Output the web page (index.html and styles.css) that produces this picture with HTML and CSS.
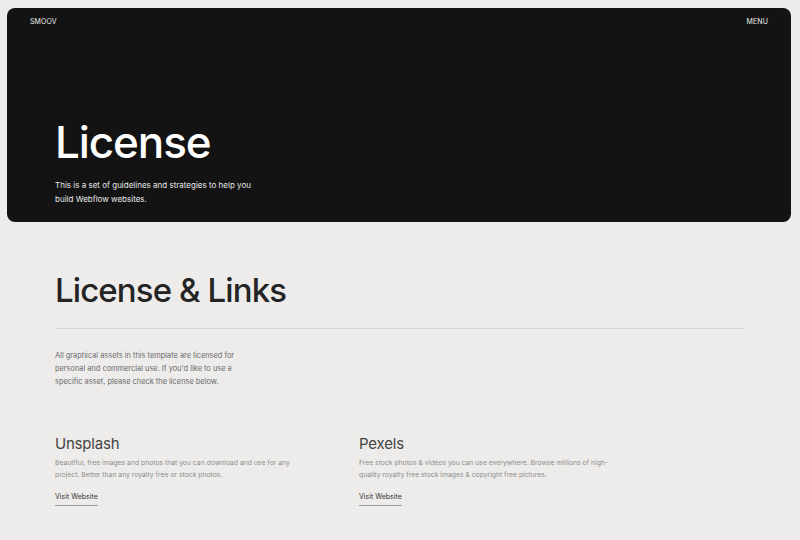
FILE: index.html
```html
<!DOCTYPE html>
<html lang="en">
<head>
<meta charset="utf-8">
<title>License</title>
<link rel="stylesheet" href="styles.css">
</head>
<body>
<header class="hero">
  <nav class="nav">
    <a class="brand" href="#">SMOOV</a>
    <a class="menu" href="#">MENU</a>
  </nav>
  <div class="hero-body">
    <h1 class="hero-title">License</h1>
    <p class="hero-text">This is a set of guidelines and strategies to help you build Webflow websites.</p>
  </div>
</header>
<main class="content">
  <h2 class="section-title">License &amp; Links</h2>
  <hr class="divider">
  <p class="intro">All graphical assets in this template are licensed for personal and commercial use. If you'd like to use a specific asset, please check the license below.</p>
  <div class="sources">
    <div class="source">
      <h3 class="source-name">Unsplash</h3>
      <p class="source-desc">Beautiful, free images and photos that you can download and use for any project. Better than any royalty free or stock photos.</p>
      <a class="source-link" href="#">Visit Website</a>
    </div>
    <div class="source">
      <h3 class="source-name">Pexels</h3>
      <p class="source-desc">Free stock photos &amp; videos you can use everywhere. Browse millions of high-quality royalty free stock images &amp; copyright free pictures.</p>
      <a class="source-link" href="#">Visit Website</a>
    </div>
  </div>
</main>
</body>
</html>
```

FILE: styles.css
```css
* { box-sizing: border-box; }
html, body { margin: 0; padding: 0; }
body {
  background: #edecea;
  font-family: Inter, "Noto Sans", sans-serif;
  color: #222;
  width: 800px;
  height: 540px;
  overflow: hidden;
}
a { text-decoration: none; color: inherit; }

.hero {
  margin: 8px 9px 0 7px;
  height: 214px;
  background: #131313;
  border-radius: 8px;
  color: #fff;
  display: flex;
  flex-direction: column;
  justify-content: space-between;
  padding: 0 0 16px 0;
}
.nav {
  display: flex;
  justify-content: space-between;
  padding: 8px 23px 0 23px;
  font-size: 7px;
  letter-spacing: 0.1px;
  line-height: 12px;
}
.brand, .menu { color: #eee; }
.hero-body { padding-left: 48px; }
.hero-title {
  margin: 0;
  font-size: 44px;
  font-weight: 500;
  letter-spacing: -1.1px;
  line-height: 50px;
}
.hero-text {
  margin: 12px 0 0 0;
  width: 205px;
  font-size: 8px;
  line-height: 13.5px;
  color: #e8e8e8;
}

.content {
  padding: 0 56px 0 55px;
}
.section-title {
  margin: 48px 0 0 0;
  font-size: 33px;
  font-weight: 500;
  letter-spacing: -0.9px;
  line-height: 40px;
  color: #242424;
}
.divider {
  margin: 18px 0 0 0;
  border: 0;
  height: 1px;
  background: #d9d7d4;
}
.intro {
  margin: 21px 0 0 0;
  width: 190px;
  font-size: 7.4px;
  line-height: 12.8px;
  color: #6a6a6a;
}
.sources {
  display: grid;
  grid-template-columns: 304px 304px;
  margin-top: 46px;
}
.source-name {
  margin: 0;
  font-size: 15px;
  font-weight: 400;
  letter-spacing: -0.2px;
  line-height: 20px;
  color: #444;
}
.source-desc {
  margin: 3px 0 0 0;
  width: 255px;
  font-size: 6.8px;
  line-height: 11.6px;
  color: #8d8d8d;
}
.source-link {
  display: inline-block;
  margin-top: 11px;
  font-size: 7px;
  line-height: 10px;
  color: #333;
  padding-bottom: 3px;
  border-bottom: 1px solid #9a9a9a;
}
```
